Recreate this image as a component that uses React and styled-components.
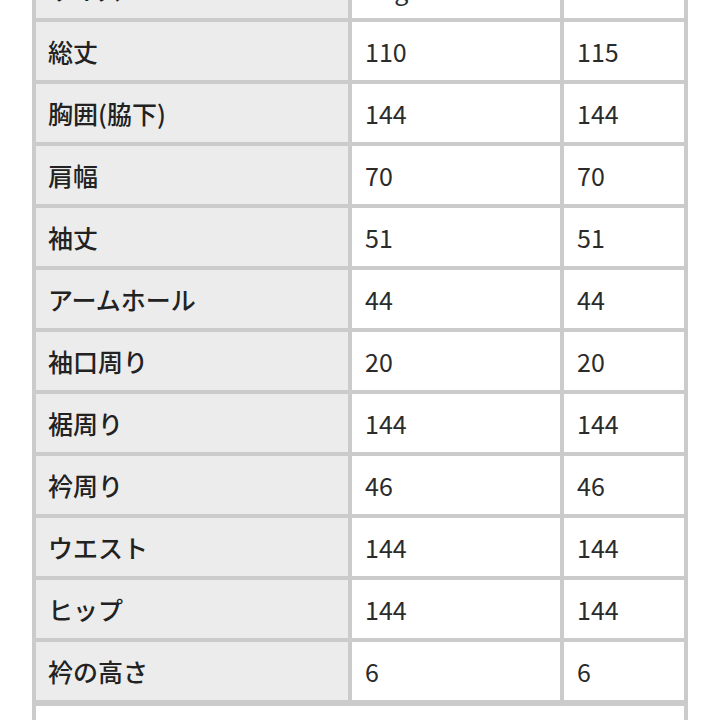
import React from "react";
import styled, { createGlobalStyle } from "styled-components";

const GlobalStyle = createGlobalStyle`
  html, body {
    margin: 0;
    padding: 0;
    background: #ffffff;
    overflow: hidden;
  }
  body {
    font-family: "Noto Sans CJK JP", "Noto Sans", sans-serif;
  }
`;

const Page = styled.div`
  width: 720px;
  height: 720px;
  overflow: hidden;
`;

const SizeTable = styled.div`
  display: grid;
  grid-template-columns: 312px 208px 120px;
  grid-auto-rows: 58px;
  gap: 4px;
  padding: 4px;
  width: 648px;
  margin: -44px 0 0 32px;
  background: #cbcbcb;
`;

const Cell = styled.div`
  display: flex;
  align-items: center;
  font-size: 25px;
  line-height: 1;
  color: #2b2b2b;
  white-space: nowrap;
`;

const LabelCell = styled(Cell)`
  background: #ececec;
  padding-left: 12px;
  font-weight: 500;
  color: #222222;
`;

const ValueCell = styled(Cell)`
  background: #ffffff;
  padding-left: 13px;
  font-weight: 400;
`;

const NoteCell = styled.div`
  grid-column: 1 / -1;
  margin-top: 2px;
  height: 80px;
  background: #ffffff;
`;

const rows = [
  ["サイズ", "Regular", "XL"],
  ["総丈", "110", "115"],
  ["胸囲(脇下)", "144", "144"],
  ["肩幅", "70", "70"],
  ["袖丈", "51", "51"],
  ["アームホール", "44", "44"],
  ["袖口周り", "20", "20"],
  ["裾周り", "144", "144"],
  ["衿周り", "46", "46"],
  ["ウエスト", "144", "144"],
  ["ヒップ", "144", "144"],
  ["衿の高さ", "6", "6"],
];

const App = () => (
  <Page>
    <GlobalStyle />
    <SizeTable>
      {rows.map(([label, a, b]) => (
        <React.Fragment key={label}>
          <LabelCell>{label}</LabelCell>
          <ValueCell>{a}</ValueCell>
          <ValueCell>{b}</ValueCell>
        </React.Fragment>
      ))}
      <NoteCell />
    </SizeTable>
  </Page>
);

export default App;
